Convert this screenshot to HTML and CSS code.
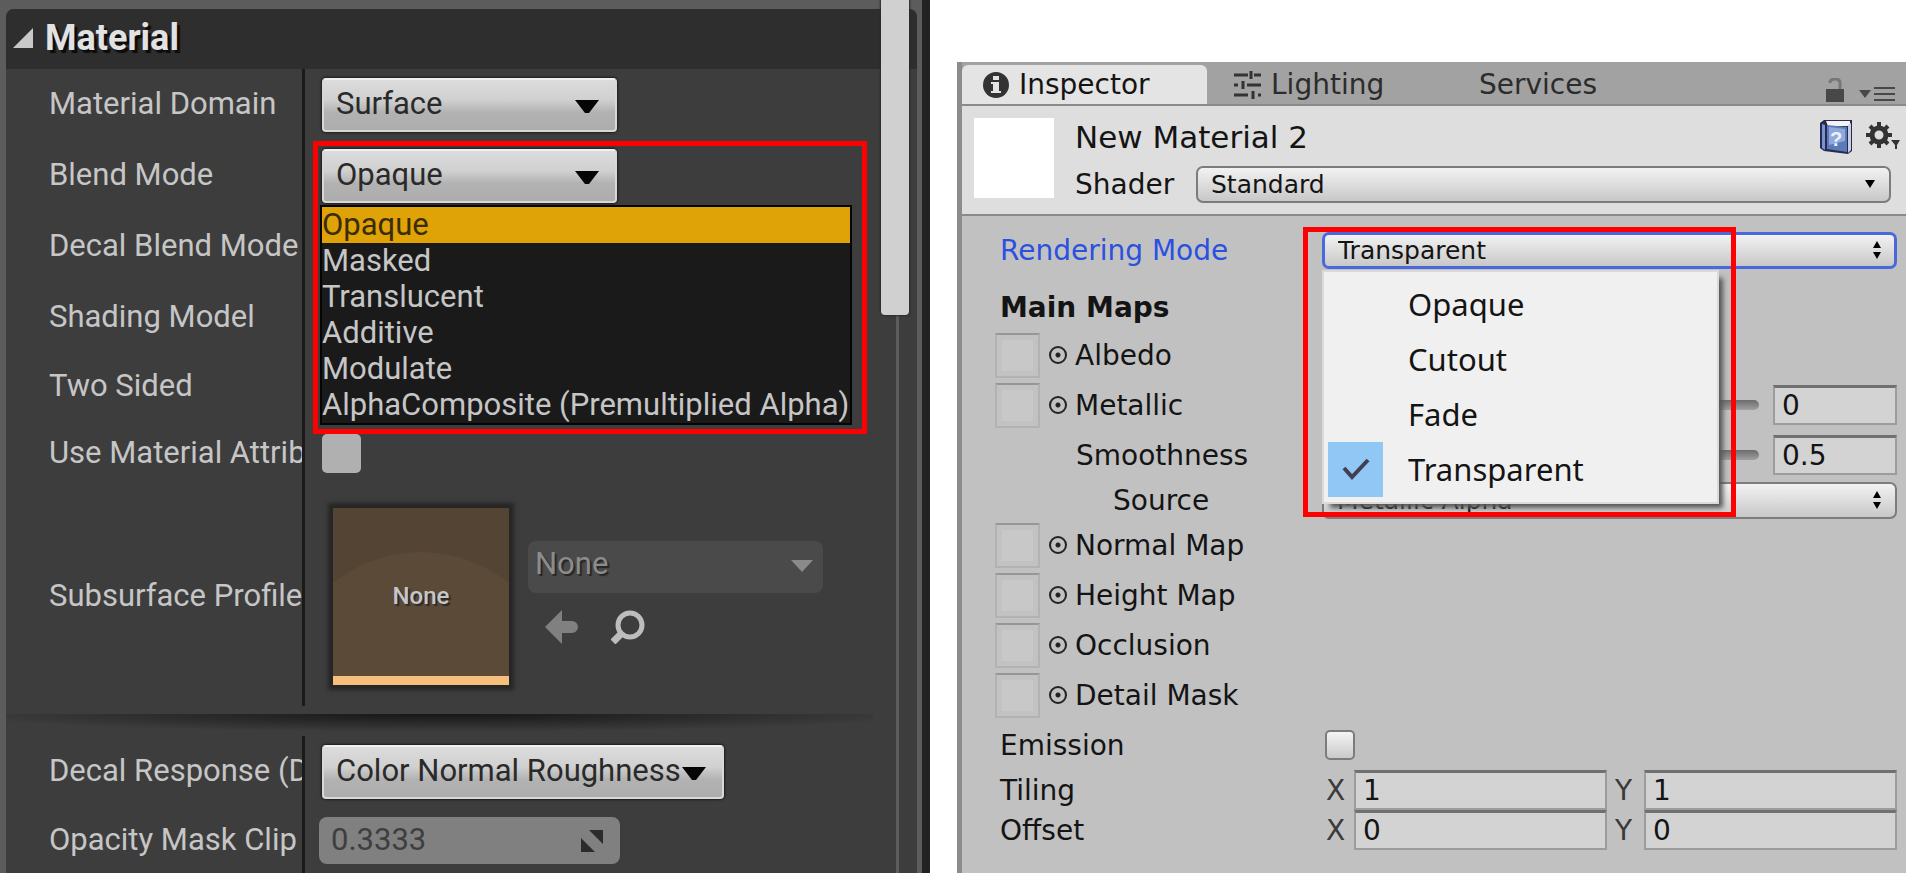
FILE: index.html
```html
<!DOCTYPE html>
<html lang="en">
  <head>
    <meta charset="UTF-8" />
    <meta name="viewport" content="width=device-width, initial-scale=1.0" />
    <title>Material</title>
    <link rel="stylesheet" href="styles.css">
  </head>
  <body>
    <div class="container">
      <section class="details">
        <div class="card">
          <h2 class="card-title">
            <svg width="20" height="20" viewBox="0 0 20 20"><path d="M20 0v20H0z" fill="#c8c8c8" /></svg>
            Material
          </h2>
          <div class="row">
            <label class="name" for="domain">Material Domain</label>
            <div class="value">
              <span class="combo">
                <select id="domain"><option>Surface</option></select>
                <svg class="arrow" width="24" height="13" viewBox="0 0 24 13"><path d="M0 0h24L14 13h-4z" /></svg>
              </span>
            </div>
          </div>
          <div class="row">
            <label class="name" for="blend">Blend Mode</label>
            <div class="value">
              <span class="combo">
                <select id="blend"><option>Opaque</option></select>
                <svg class="arrow" width="24" height="13" viewBox="0 0 24 13"><path d="M0 0h24L14 13h-4z" /></svg>
              </span>
              <ul class="dropdown" role="listbox">
                <li class="active" role="option">Opaque</li>
                <li role="option">Masked</li>
                <li role="option">Translucent</li>
                <li role="option">Additive</li>
                <li role="option">Modulate</li>
                <li role="option">AlphaComposite (Premultiplied Alpha)</li>
              </ul>
              <div class="mark mark-blend"></div>
            </div>
          </div>
          <div class="row">
            <span class="name">Decal Blend Mode</span>
            <div class="value"></div>
          </div>
          <div class="row">
            <span class="name">Shading Model</span>
            <div class="value"></div>
          </div>
          <div class="row short">
            <span class="name">Two Sided</span>
            <div class="value"></div>
          </div>
          <div class="row short">
            <label class="name" for="attrs">Use Material Attributes</label>
            <div class="value"><input class="tick" type="checkbox" id="attrs" /></div>
          </div>
          <div class="row tall">
            <label class="name" for="profile">Subsurface Profile</label>
            <div class="value">
              <div class="thumb"><span>None</span></div>
              <div class="asset">
                <span class="combo off">
                  <select id="profile"><option>None</option></select>
                  <svg class="arrow" width="22" height="12" viewBox="0 0 22 12"><path d="M0 0h22L11 12z" /></svg>
                </span>
                <div class="tools">
                  <button aria-label="Use selected">
                    <svg width="34" height="34" viewBox="0 0 34 34"><path d="M17 0v11h10a6 6 0 0 1 0 12H17v11L0 17z" fill="#808080" /></svg>
                  </button>
                  <button aria-label="Browse">
                    <svg width="34" height="34" viewBox="0 0 34 34" fill="none" stroke="#bdbdbd"><circle cx="19" cy="15" r="12" stroke-width="5" /><path d="M11 23l-9 9" stroke-width="7" /></svg>
                  </button>
                </div>
              </div>
            </div>
          </div>
          <div class="divider"></div>
          <div class="row">
            <label class="name" for="response">Decal Response (DBuffer)</label>
            <div class="value">
              <span class="combo wide">
                <select id="response"><option>Color Normal Roughness</option></select>
                <svg class="arrow" width="24" height="13" viewBox="0 0 24 13"><path d="M0 0h24L14 13h-4z" /></svg>
              </span>
            </div>
          </div>
          <div class="row short">
            <label class="name" for="clip">Opacity Mask Clip Value</label>
            <div class="value">
              <span class="spin">
                <input id="clip" type="text" value="0.3333" />
                <svg width="24" height="24" viewBox="0 0 24 24"><path d="M9 1h14v14zM1 9v14h14z" fill="#2b2b2b" /></svg>
              </span>
            </div>
          </div>
        </div>
        <div class="scrollbar"><div class="bar"></div></div>
      </section>

      <section class="inspector">
        <div class="tabs">
          <button class="tab on">
            <svg width="26" height="26" viewBox="0 0 26 26"><circle cx="13" cy="13" r="13" fill="#333" /><path d="M10 4h6v4h-6zM8 10h8v9h2v2H8v-2h2v-7H8z" fill="#e4e4e4" /></svg>
            Inspector
          </button>
          <button class="tab lighting">
            <svg width="27" height="28" viewBox="0 0 27 28" stroke="#333" stroke-width="3" fill="none"><path d="M0 4h14M20 4h7M17 0v8M0 14h4M13 14h14M9 10v8M0 24h14M24 24h3M19 20v8" /></svg>
            Lighting
          </button>
          <button class="tab services">Services</button>
          <div class="tab-tools">
            <svg width="20" height="24" viewBox="0 0 20 24"><path d="M1 11h18v13H1z" fill="#484848" /><path d="M5 5q0-4 5-4t5 4v6" fill="none" stroke="#777" stroke-width="3" /></svg>
            <svg width="36" height="16" viewBox="0 0 36 16" fill="#484848"><path d="M0 4h12L6 12zM15 1h21v2H15zM15 7h21v2H15zM15 13h21v2H15z" /></svg>
          </div>
        </div>

        <div class="head">
          <div class="preview"></div>
          <div class="head-main">
            <div class="head-line">
              <h1>New Material 2</h1>
              <button aria-label="Help">
                <svg width="34" height="36" viewBox="0 0 34 36"><path d="M1 4l4-3h28v31l-4 3-24-3-4-3z" fill="#28294f" /><path d="M7 2h24v5H9z" fill="#f4f4f6" /><path d="M3 5l3 1v25l-3-2z" fill="#7894cc" /><path d="M8 6l20 2v25L8 30z" fill="#5b7ab8" /><path d="M10 8l16 2v12L10 26z" fill="#8fa9dc" /><path d="M29 6l3-2v27l-3 3z" fill="#c7d0e2" /><text x="11" y="27" font-family="Liberation Sans" font-weight="bold" font-size="20" fill="#e8f2ff">?</text></svg>
              </button>
              <button aria-label="Settings">
                <svg width="36" height="32" viewBox="0 0 36 32"><g stroke="#333" fill="none"><circle cx="14" cy="14" r="7" stroke-width="5" /><path d="M14 1v5M14 22v5M1 14h5M22 14h5M5 5l4 4M19 19l4 4M5 23l4-4M19 9l4-4" stroke-width="4" /></g><path d="M26 19h9l-3 5v4h-2v-4z" fill="#333" /></svg>
              </button>
            </div>
            <div class="head-line">
              <label for="shader">Shader</label>
              <span class="popup">
                <select id="shader"><option>Standard</option></select>
                <svg class="arrow" width="10" height="8" viewBox="0 0 10 8"><path d="M0 0h10L5 8z" /></svg>
              </span>
            </div>
          </div>
        </div>

        <div class="props">
          <div class="prop mode">
            <label class="blue" for="mode">Rendering Mode</label>
            <div class="field">
              <span class="popup focus">
                <select id="mode"><option>Transparent</option></select>
                <svg class="arrow" width="8" height="18" viewBox="0 0 8 18"><path d="M0 7h8L4 0zM0 11h8l-4 7z" /></svg>
              </span>
              <ul class="menu" role="listbox">
                <li role="option">Opaque</li>
                <li role="option">Cutout</li>
                <li role="option">Fade</li>
                <li class="checked" role="option">
                  <i><svg width="28" height="22" viewBox="0 0 28 22"><path d="M2 10l8 9L26 2" fill="none" stroke="#404050" stroke-width="4" /></svg></i>
                  Transparent
                </li>
              </ul>
              <div class="mark mark-mode"></div>
            </div>
          </div>
          <h3 class="prop heading">Main Maps</h3>
          <div class="prop map">
            <span class="slot"></span><i class="pick"></i><span>Albedo</span>
          </div>
          <div class="prop">
            <label class="map" for="metallic"><span class="slot"></span><i class="pick"></i><span>Metallic</span></label>
            <div class="field">
              <input type="range" min="0" max="1" step="0.1" value="0" aria-label="Metallic" />
              <input class="box num" id="metallic" type="text" value="0" />
            </div>
          </div>
          <div class="prop">
            <label class="indent" for="smooth">Smoothness</label>
            <div class="field">
              <input type="range" min="0" max="1" step="0.1" value="0.5" aria-label="Smoothness" />
              <input class="box num" id="smooth" type="text" value="0.5" />
            </div>
          </div>
          <div class="prop low">
            <label class="indent more" for="source">Source</label>
            <div class="field">
              <span class="popup">
                <select id="source"><option>Metallic Alpha</option></select>
                <svg class="arrow" width="8" height="18" viewBox="0 0 8 18"><path d="M0 7h8L4 0zM0 11h8l-4 7z" /></svg>
              </span>
            </div>
          </div>
          <div class="prop map"><span class="slot"></span><i class="pick"></i><span>Normal Map</span></div>
          <div class="prop map"><span class="slot"></span><i class="pick"></i><span>Height Map</span></div>
          <div class="prop map"><span class="slot"></span><i class="pick"></i><span>Occlusion</span></div>
          <div class="prop map"><span class="slot"></span><i class="pick"></i><span>Detail Mask</span></div>
          <div class="prop">
            <label for="emission">Emission</label>
            <div class="field"><input class="check" type="checkbox" id="emission" /></div>
          </div>
          <div class="prop low">
            <span class="label">Tiling</span>
            <div class="field">
              <label for="tx">X</label><input class="box" id="tx" type="text" value="1" />
              <label for="ty">Y</label><input class="box" id="ty" type="text" value="1" />
            </div>
          </div>
          <div class="prop low">
            <span class="label">Offset</span>
            <div class="field">
              <label for="ox">X</label><input class="box" id="ox" type="text" value="0" />
              <label for="oy">Y</label><input class="box" id="oy" type="text" value="0" />
            </div>
          </div>
        </div>
      </section>
    </div>
  </body>
</html>
```

FILE: styles.css
```css
* {
  box-sizing: border-box;
  margin: 0px;
  padding: 0px;
}
body {
  background: white;
}
button {
  border: none;
  background: none;
  font: inherit;
  color: inherit;
}
svg {
  display: block;
  flex: none;
}
ul {
  list-style: none;
}
select,
input {
  appearance: none;
  font: inherit;
  color: inherit;
  border: none;
  border-radius: 0;
  outline: none;
  min-width: 0;
}
.container {
  display: grid;
  grid-template-columns: minmax(0, 930fr) minmax(0, 949fr);
  gap: 27px;
  padding-right: 1px;
  min-height: 100vh;
}
.mark {
  position: absolute;
  border: 5px solid red;
  z-index: 99;
  pointer-events: none;
}

/* left: details panel */
.details {
  position: relative;
  padding: 9px 5px 0 6px;
  border-right: 8px solid #222;
  background: #5c5c5c;
  font-family: Roboto, "Liberation Sans", sans-serif;
  font-size: 31px;
  color: #c6c6c6;
}
.card {
  height: 100%;
  background: #3d3d3d;
  border-radius: 8px 8px 0 0;
}
.card-title {
  display: flex;
  align-items: center;
  gap: 12px;
  height: 60px;
  padding: 0 0 2px 7px;
  background: #2e2e2e;
  border-radius: 8px 8px 0 0;
  font-size: 36px;
  color: #e2e2e2;
  text-shadow: 3px 3px 1px #0c0c0c;
}
.row {
  display: flex;
  height: 71px;
}
.short {
  height: 67px;
}
.tall {
  height: 219px;
}
.name {
  flex: none;
  display: flex;
  align-items: center;
  width: 299px;
  padding: 0 0 2px 43px;
  border-right: 3px solid #1a1a1a;
  overflow: hidden;
  white-space: nowrap;
}
.value {
  position: relative;
  flex: 1;
  display: flex;
  align-items: center;
  padding-left: 17px;
}
.combo {
  position: relative;
  width: 295px;
  color: #2a2a2a;
}
.combo select {
  display: block;
  width: 100%;
  height: 54px;
  padding: 0 12px 2px;
  border: 2px solid #d8d8d8;
  border-top-color: #f0f0f0;
  border-radius: 4px;
  background: linear-gradient(#dcdcdc, #d0d0d0 40%, #b2b2b2 65%, #adadad);
  box-shadow: 0 0 2px 1px #1c1c1c;
}
.combo .arrow {
  position: absolute;
  right: 18px;
  top: 22px;
  fill: #050505;
  pointer-events: none;
}
.combo.wide {
  width: 402px;
}
.combo.off {
  display: block;
  color: #8c8c8c;
}
.combo.off select {
  height: 52px;
  padding: 0 7px 8px;
  border: none;
  border-radius: 8px;
  background: #4a4a4a;
  box-shadow: none;
  text-shadow: 2px 2px 1px #262626;
}
.combo.off .arrow {
  right: 10px;
  top: 19px;
  fill: #8a8a8a;
}
.dropdown {
  position: absolute;
  left: 15px;
  top: 65px;
  width: 532px;
  border: 2px solid #050505;
  background: #1a1a1a;
  z-index: 9;
}
.dropdown li {
  height: 36px;
  line-height: 36px;
  white-space: nowrap;
}
.dropdown .active {
  background: #dfa207;
  color: #3a2c06;
}
.mark-blend {
  left: 8px;
  top: 1px;
  width: 554px;
  height: 293px;
}
.tick {
  width: 39px;
  height: 39px;
  border-radius: 5px;
  background: #b0b0b0;
}
.thumb {
  display: flex;
  align-items: center;
  justify-content: center;
  width: 176px;
  height: 177px;
  margin-left: 11px;
  padding-top: 8px;
  border-bottom: 9px solid #f5c07c;
  background: radial-gradient(circle at 50% 110%, #5c4a38 140px, #544434 141px);
  box-shadow: 0 0 4px 5px #262626;
  font-size: 24px;
  font-weight: 500;
  text-shadow: 2px 2px 1px #2a2a2a;
}
.asset {
  margin-left: 19px;
  padding-bottom: 8px;
}
.tools {
  display: flex;
  gap: 32px;
  padding: 17px 0 0 17px;
}
.divider {
  height: 30px;
  margin-right: 44px;
  background: radial-gradient(56% 18px at 50% 0, #161616, #3d3d3d) no-repeat 0 8px;
}
.spin {
  display: flex;
  align-items: center;
  width: 301px;
  height: 47px;
  margin-left: -3px;
  padding: 0 16px 0 12px;
  border-radius: 8px;
  background: #808080;
  color: #3e3e3e;
}
.spin input {
  flex: 1;
  padding-bottom: 2px;
  background: none;
}
.scrollbar {
  position: absolute;
  top: 0;
  bottom: 0;
  right: 13px;
  width: 28px;
  background: linear-gradient(#5c5c5c, #5c5c5c) no-repeat 15px 0 / 3px 100%;
}
.bar {
  height: 315px;
  background: #d0d0d0;
  border-radius: 0 0 4px 4px;
  box-shadow: 0 0 2px 1px #2a2a2a;
}

/* right: inspector panel */
.inspector {
  margin-top: 62px;
  border-left: 5px solid #8c8c8c;
  background: #c1c1c1;
  font-family: "DejaVu Sans", Verdana, sans-serif;
  font-size: 28px;
  color: #141414;
}
.tabs {
  display: flex;
  height: 44px;
  padding-top: 3px;
  border-bottom: 2px solid #8a8a8a;
  background: #a2a2a2;
}
.tab {
  display: flex;
  align-items: center;
  gap: 10px;
  color: #2c2c2c;
}
.tab.on {
  width: 245px;
  padding-left: 21px;
  border-radius: 6px 6px 0 0;
  background: #e4e4e4;
  color: #141414;
}
.lighting {
  width: 272px;
  padding-left: 27px;
}
.tab-tools {
  display: flex;
  align-items: flex-end;
  gap: 14px;
  margin-left: auto;
  padding: 0 11px 2px 0;
}
.head {
  display: flex;
  gap: 21px;
  height: 110px;
  padding: 8px 15px 0 12px;
  border-bottom: 2px solid #8a8a8a;
  background: #dedede;
}
.preview {
  width: 80px;
  height: 80px;
  margin-top: 4px;
  background: white;
}
.head-main {
  flex: 1;
}
.head-line {
  display: flex;
  align-items: center;
  height: 49px;
}
.head-line:first-child {
  height: 46px;
  gap: 12px;
  margin-right: -10px;
}
h1 {
  flex: 1;
  font-size: 31px;
  font-weight: normal;
}
.head-line label {
  width: 121px;
}
.popup {
  position: relative;
  flex: 1;
  font-size: 25px;
}
.popup select {
  display: block;
  width: 100%;
  height: 37px;
  padding: 0 13px;
  border: 2px solid #7c7c7c;
  border-radius: 7px;
  background: linear-gradient(#f2f2f2, #c8c8c8);
}
.popup.focus select {
  border: 3px solid #4a68dc;
}
.popup .arrow {
  position: absolute;
  right: 16px;
  top: 14px;
  pointer-events: none;
}
.prop .popup .arrow {
  top: 9px;
}
.props {
  padding: 0 9px 0 33px;
}
.prop {
  display: flex;
  align-items: center;
  height: 50px;
}
.prop > label,
.prop > .label {
  flex: none;
  width: 327px;
  padding-left: 5px;
}
.mode {
  height: 68px;
}
.blue {
  color: #2a50e0;
}
.heading {
  height: 46px;
  padding-left: 5px;
  font-size: 28px;
}
.low {
  height: 40px;
}
.map {
  display: flex;
  align-items: center;
}
.prop > label.map {
  padding-left: 0;
}
.slot {
  width: 45px;
  height: 45px;
  border: 2px solid #b2b2b2;
  border-top-color: #969696;
  background: #c8c8c8;
  box-shadow: inset 0 0 0 5px #c2c2c2;
}
.pick {
  width: 18px;
  height: 18px;
  margin: 0 8px 0 9px;
  border: 2px solid #222;
  border-radius: 50%;
  background: radial-gradient(circle, #222 2px, transparent 3px);
}
.prop > .indent {
  padding-left: 81px;
}
.prop > .more {
  padding-left: 118px;
}
.field {
  position: relative;
  flex: 1;
  display: flex;
  align-items: center;
  min-width: 0;
}
.field label {
  flex: none;
  width: 32px;
  padding-left: 4px;
  color: #3a3a3a;
}
.box + label {
  width: 37px;
  padding-left: 8px;
}
.box {
  flex: 1;
  height: 40px;
  padding: 0 7px;
  border: 2px solid #9c9c9c;
  border-top: 3px solid #707070;
  background: #d3d3d3;
}
.box.num {
  flex: none;
  width: 124px;
  margin-left: 14px;
}
input[type="range"] {
  flex: 1;
  height: 10px;
  border-radius: 5px;
  background: linear-gradient(#6c6c6c, #a0a0a0);
}
input[type="range"]::-webkit-slider-thumb {
  appearance: none;
  width: 20px;
  height: 24px;
  border: 2px solid #777;
  border-radius: 10px;
  background: #ddd;
}
.check {
  width: 30px;
  height: 30px;
  margin-left: 3px;
  border: 2px solid #7c7c7c;
  border-radius: 5px;
  background: linear-gradient(#f4f4f4, #cacaca);
}
.menu {
  position: absolute;
  left: 0;
  top: 38px;
  width: 397px;
  padding: 5px 6px;
  border: 2px solid #dadada;
  background: #f0f0f0;
  box-shadow: 6px 6px 5px -2px #555;
  font-family: "Noto Sans", "Open Sans", sans-serif;
  font-size: 31px;
  z-index: 9;
}
.menu li {
  position: relative;
  height: 55px;
  line-height: 55px;
  padding-left: 78px;
}
.menu i {
  position: absolute;
  left: -2px;
  top: 0;
  display: flex;
  align-items: center;
  justify-content: center;
  width: 55px;
  height: 55px;
  background: #91c7f5;
}
.mark-mode {
  left: -19px;
  top: -5px;
  width: 433px;
  height: 290px;
}
```
